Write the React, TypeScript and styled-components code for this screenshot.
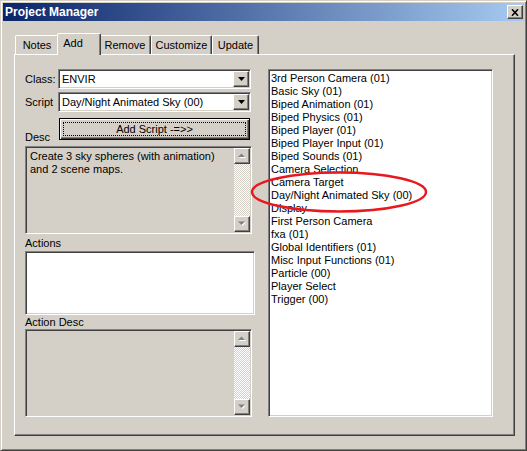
import React from "react";
import styled, { createGlobalStyle } from "styled-components";

const FACE = "#d4d0c8";

const Global = createGlobalStyle`
  html, body { margin: 0; padding: 0; background: ${FACE}; }
  body { font-family: "Liberation Sans", Arial, sans-serif; font-size: 11px; color: #000; }
  * { box-sizing: border-box; }
`;

const Window = styled.div`
  width: 527px;
  height: 451px;
  background: ${FACE};
  border: 1px solid;
  border-color: ${FACE} #404040 #404040 ${FACE};
  box-shadow: inset 1px 1px #fff, inset -1px -1px #808080;
  padding: 2px;
  display: flex;
  flex-direction: column;
`;

const TitleBar = styled.div`
  height: 18px;
  flex: 0 0 18px;
  background: linear-gradient(to right, #0a246a, #a6caf0);
  display: flex;
  align-items: center;
  justify-content: space-between;
  padding: 0 1px 0 2px;
`;

const Title = styled.span`
  color: #fff;
  font-weight: bold;
  font-size: 12px;
  line-height: 14px;
`;

const CloseButton = styled.div`
  width: 16px;
  height: 14px;
  background: ${FACE};
  border: 1px solid;
  border-color: #fff #404040 #404040 #fff;
  box-shadow: inset -1px -1px #808080;
  display: flex;
  align-items: center;
  justify-content: center;
`;

const Body = styled.div`
  flex: 1;
  display: flex;
  flex-direction: column;
  padding: 12px 9px 12px 11px;
`;

const TabStrip = styled.div`
  display: flex;
  align-items: flex-end;
  height: 21px;
  flex: 0 0 21px;
  margin-left: 1px;
`;

const Tab = styled.div<{ $w: number; $active?: boolean }>`
  width: ${(p) => p.$w}px;
  height: ${(p) => (p.$active ? 22 : 19)}px;
  margin: ${(p) => (p.$active ? "0 -2px -1px -2px" : "0")};
  padding-right: ${(p) => (p.$active ? 12 : 0)}px;
  position: relative;
  z-index: ${(p) => (p.$active ? 1 : 0)};
  background: ${FACE};
  border-top: 1px solid #fff;
  border-left: 1px solid #fff;
  border-right: 1px solid #404040;
  border-radius: 2px 2px 0 0;
  box-shadow: inset -1px 0 #808080;
  display: flex;
  align-items: center;
  justify-content: center;
  padding-bottom: ${(p) => (p.$active ? 2 : 0)}px;
  line-height: 13px;
  white-space: nowrap;
`;

const Panel = styled.div`
  position: relative;
  flex: 1;
  background: ${FACE};
  border: 1px solid;
  border-color: #fff #404040 #404040 #fff;
  box-shadow: inset -1px -1px #808080;
  display: grid;
  grid-template-columns: 230px 225px;
  column-gap: 13px;
  padding: 14px 20px 18px 10px;
`;

const LeftCol = styled.div`
  display: flex;
  flex-direction: column;
`;

const FieldRow = styled.div<{ $h: number; $mt?: number }>`
  display: flex;
  align-items: center;
  height: ${(p) => p.$h}px;
  margin-top: ${(p) => p.$mt ?? 0}px;
`;

const RowLabel = styled.span<{ $bottom?: boolean }>`
  flex: 0 0 33px;
  line-height: 13px;
  align-self: ${(p) => (p.$bottom ? "flex-end" : "center")};
  margin-bottom: ${(p) => (p.$bottom ? -4 : 0)}px;
`;

const Label = styled.div<{ $mt: number }>`
  line-height: 13px;
  margin-top: ${(p) => p.$mt}px;
`;

const sunken = `
  border: 1px solid;
  border-color: #808080 #fff #fff #808080;
  box-shadow: inset 1px 1px #404040, inset -1px -1px ${FACE};
`;

const raised = `
  background: ${FACE};
  border: 1px solid;
  border-color: #fff #404040 #404040 #fff;
  box-shadow: inset -1px -1px #808080;
`;

const Combo = styled.div`
  ${sunken}
  width: 193px;
  height: 20px;
  background: #fff;
  display: flex;
  align-items: center;
  padding: 1px 1px 1px 3px;
  line-height: 13px;
`;

const ComboText = styled.span`
  flex: 1;
  white-space: nowrap;
`;

const DropButton = styled.div`
  ${raised}
  width: 16px;
  height: 16px;
  flex: 0 0 16px;
  display: flex;
  align-items: center;
  justify-content: center;
`;

const PushButton = styled.div`
  width: 191px;
  height: 22px;
  margin-left: 1px;
  background: ${FACE};
  border: 1px solid #000;
  box-shadow: inset 1px 1px #fff, inset -1px -1px #404040, inset -2px -2px #808080;
  outline: 1px dotted #000;
  outline-offset: -5px;
  display: flex;
  align-items: center;
  justify-content: center;
  line-height: 13px;
`;

const TextPanel = styled.div<{ $mt: number }>`
  ${sunken}
  width: 227px;
  height: 88px;
  margin-top: ${(p) => p.$mt}px;
  background: ${FACE};
  padding: 1px;
  display: grid;
  grid-template-columns: 1fr 16px;
`;

const TextBody = styled.div`
  padding: 2px 3px;
  line-height: 13px;
`;

const ScrollBar = styled.div`
  display: flex;
  flex-direction: column;
`;

const ScrollArrow = styled.div`
  ${raised}
  width: 16px;
  height: 16px;
  flex: 0 0 16px;
  display: flex;
  align-items: center;
  justify-content: center;
`;

const ScrollTrack = styled.div`
  flex: 1;
  background: repeating-conic-gradient(#fff 0 25%, ${FACE} 0 50%) 0 0 / 2px 2px;
`;

const ListBox = styled.div<{ $w?: number; $h?: number; $mt?: number }>`
  ${sunken}
  background: #fff;
  width: ${(p) => (p.$w ? `${p.$w}px` : "auto")};
  height: ${(p) => (p.$h ? `${p.$h}px` : "auto")};
  margin-top: ${(p) => p.$mt ?? 0}px;
  padding: 2px 2px;
`;

const ListItem = styled.div`
  line-height: 13px;
  white-space: nowrap;
`;

const Annotation = styled.svg`
  position: absolute;
  left: 235px;
  top: 115px;
  width: 180px;
  height: 44px;
  overflow: visible;
  pointer-events: none;
`;

const DownTriangle = ({ color = "#000" }: { color?: string }) => (
  <svg width="7" height="4" viewBox="0 0 7 4">
    <path d="M0 0H7L3.5 4Z" fill={color} />
  </svg>
);

const DisabledArrow = ({ up }: { up?: boolean }) => (
  <svg width="9" height="6" viewBox="0 0 9 6">
    {up ? (
      <>
        <path d="M1 5H8L4.5 1.5Z" fill="#fff" />
        <path d="M0 4H7L3.5 0.5Z" fill="#808080" />
      </>
    ) : (
      <>
        <path d="M1 1.5H8L4.5 5Z" fill="#fff" />
        <path d="M0 0.5H7L3.5 4Z" fill="#808080" />
      </>
    )}
  </svg>
);

const CloseGlyph = () => (
  <svg width="8" height="7" viewBox="0 0 8 7">
    <path d="M1 0.3L7 6.7M7 0.3L1 6.7" stroke="#000" strokeWidth="1.6" />
  </svg>
);

const scripts = [
  "3rd Person Camera (01)",
  "Basic Sky (01)",
  "Biped Animation (01)",
  "Biped Physics (01)",
  "Biped Player (01)",
  "Biped Player Input (01)",
  "Biped Sounds (01)",
  "Camera Selection",
  "Camera Target",
  "Day/Night Animated Sky (00)",
  "Display",
  "First Person Camera",
  "fxa (01)",
  "Global Identifiers (01)",
  "Misc Input Functions (01)",
  "Particle (00)",
  "Player Select",
  "Trigger (00)",
];

const tabs = [
  { label: "Notes", w: 44 },
  { label: "Add", w: 44, active: true },
  { label: "Remove", w: 52 },
  { label: "Customize", w: 61 },
  { label: "Update", w: 47 },
];

const Scroll = () => (
  <ScrollBar>
    <ScrollArrow>
      <DisabledArrow up />
    </ScrollArrow>
    <ScrollTrack />
    <ScrollArrow>
      <DisabledArrow />
    </ScrollArrow>
  </ScrollBar>
);

export default function App() {
  return (
    <>
      <Global />
      <Window>
        <TitleBar>
          <Title>Project Manager</Title>
          <CloseButton>
            <CloseGlyph />
          </CloseButton>
        </TitleBar>
        <Body>
          <TabStrip>
            {tabs.map((t) => (
              <Tab key={t.label} $w={t.w} $active={t.active}>
                {t.label}
              </Tab>
            ))}
          </TabStrip>
          <Panel>
            <LeftCol>
              <FieldRow $h={20}>
                <RowLabel>Class:</RowLabel>
                <Combo>
                  <ComboText>ENVIR</ComboText>
                  <DropButton>
                    <DownTriangle />
                  </DropButton>
                </Combo>
              </FieldRow>
              <FieldRow $h={20} $mt={3}>
                <RowLabel>Script</RowLabel>
                <Combo>
                  <ComboText>Day/Night Animated Sky (00)</ComboText>
                  <DropButton>
                    <DownTriangle />
                  </DropButton>
                </Combo>
              </FieldRow>
              <FieldRow $h={22} $mt={6}>
                <RowLabel $bottom>Desc</RowLabel>
                <PushButton>Add Script -=&gt;&gt;</PushButton>
              </FieldRow>
              <TextPanel $mt={6}>
                <TextBody>
                  Create 3 sky spheres (with animation)
                  <br />
                  and 2 scene maps.
                </TextBody>
                <Scroll />
              </TextPanel>
              <Label $mt={3}>Actions</Label>
              <ListBox $w={230} $h={64} $mt={1} />
              <Label $mt={1}>Action Desc</Label>
              <TextPanel $mt={0}>
                <TextBody />
                <Scroll />
              </TextPanel>
            </LeftCol>
            <ListBox>
              {scripts.map((s) => (
                <ListItem key={s}>{s}</ListItem>
              ))}
            </ListBox>
            <Annotation viewBox="0 0 180 44">
              <ellipse cx="89" cy="22" rx="87" ry="19.5" fill="none" stroke="#e8191e" strokeWidth="2.4" />
            </Annotation>
          </Panel>
        </Body>
      </Window>
    </>
  );
}
